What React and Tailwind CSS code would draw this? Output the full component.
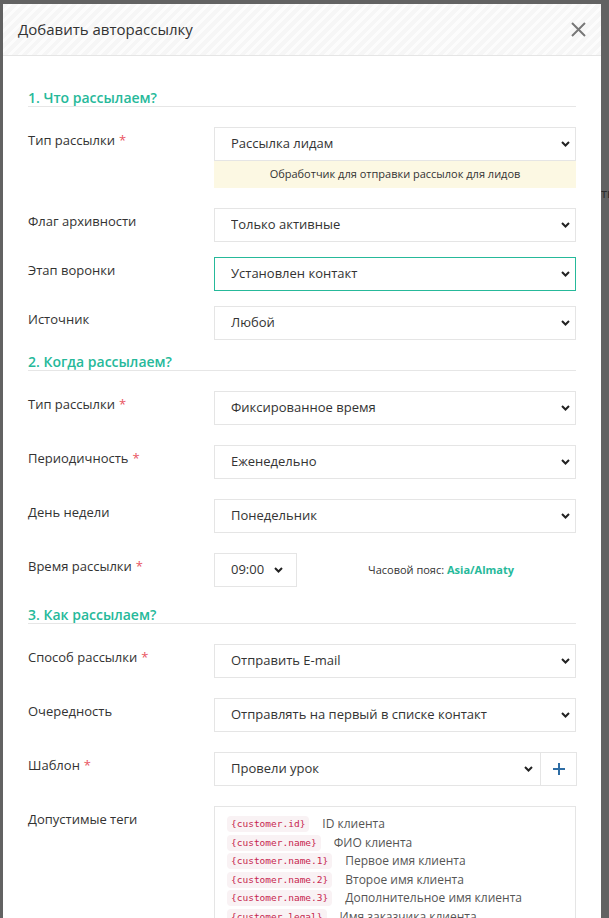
import React from "react";

// Шеврон селекта
function Chevron({ className = "" }) {
  return (
    <svg
      width="9"
      height="6"
      viewBox="0 0 9 6"
      className={"pointer-events-none absolute top-1/2 -translate-y-1/2 " + className}
    >
      <path d="M1 1l3.5 3.5L8 1" fill="none" stroke="#222" strokeWidth="2" />
    </svg>
  );
}

function Select({ value, focused = false, className = "w-[362px]", chevron = "right-[6px]" }) {
  return (
    <div className={"relative h-[34px] " + className}>
      <select
        defaultValue={value}
        className={
          "h-full w-full appearance-none bg-white pl-[16px] pr-6 text-[13px] text-[#333] outline-none border " +
          (focused ? "border-[#26b99a]" : "border-[#e5e5e5]")
        }
      >
        <option>{value}</option>
      </select>
      <Chevron className={chevron} />
    </div>
  );
}

function Label({ children, required }) {
  return (
    <div className="w-[186px] shrink-0 pt-[4px] text-[13px] leading-[18px] text-[#333]">
      {children}
      {required && <span className="ml-[4px] text-[#e9545f]">*</span>}
    </div>
  );
}

function Row({ label, required, className = "", children }) {
  return (
    <div className={"flex " + className}>
      <Label required={required}>{label}</Label>
      <div>{children}</div>
    </div>
  );
}

function Heading({ children, className = "" }) {
  return (
    <div
      className={
        "border-b border-[#e6e6e6] text-[14px] font-semibold leading-[16px] text-[#26b99a] " + className
      }
    >
      {children}
    </div>
  );
}

const tags = [
  ["{customer.id}", "ID клиента"],
  ["{customer.name}", "ФИО клиента"],
  ["{customer.name.1}", "Первое имя клиента"],
  ["{customer.name.2}", "Второе имя клиента"],
  ["{customer.name.3}", "Дополнительное имя клиента"],
  ["{customer.legal}", "Имя заказчика клиента"],
];

export default function App() {
  return (
    <div
      className="flex h-[918px] w-[609px] overflow-hidden bg-[#626262] pl-[3px] pt-[4px]"
      style={{ fontFamily: "'Open Sans', 'Noto Sans', sans-serif" }}
    >
      {/* ── Модалка ─────────────────────────────────────────── */}
      <div className="w-[598px] shrink-0 bg-white">
        <div className="flex h-[52px] items-center justify-between border-b border-[#e5e5e5] bg-[repeating-linear-gradient(135deg,#f6f6f6_0,#f6f6f6_4px,#fcfcfc_4px,#fcfcfc_7px)] pl-[15px] pr-[15px]">
          <span className="text-[15px] text-[#333]">Добавить авторассылку</span>
          <svg width="15" height="15" viewBox="0 0 15 15">
            <path d="M1 1l13 13M14 1L1 14" stroke="#777" strokeWidth="2" />
          </svg>
        </div>

        <div className="px-[25px] pt-[34px]">
          <Heading>1. Что рассылаем?</Heading>

          <Row label="Тип рассылки" required className="mt-[20px]">
            <Select value="Рассылка лидам" />
            <div className="flex h-[27px] w-[362px] items-center justify-center bg-[#fcf8e3] text-[11px] text-[#333]">
              Обработчик для отправки рассылок для лидов
            </div>
          </Row>
          <Row label="Флаг архивности" className="mt-[20px]">
            <Select value="Только активные" />
          </Row>
          <Row label="Этап воронки" className="mt-[15px]">
            <Select value="Установлен контакт" focused />
          </Row>
          <Row label="Источник" className="mt-[15px]">
            <Select value="Любой" />
          </Row>

          <Heading className="mt-[14px]">2. Когда рассылаем?</Heading>

          <Row label="Тип рассылки" required className="mt-[20px]">
            <Select value="Фиксированное время" />
          </Row>
          <Row label="Периодичность" required className="mt-[20px]">
            <Select value="Еженедельно" />
          </Row>
          <Row label="День недели" className="mt-[20px]">
            <Select value="Понедельник" />
          </Row>
          <Row label="Время рассылки" required className="mt-[20px]">
            <div className="flex items-center">
              <Select value="09:00" className="w-[83px]" chevron="right-[14px]" />
              <span className="ml-[71px] text-[11px] text-[#333]">
                Часовой пояс: <b className="font-bold text-[#26b99a]">Asia/Almaty</b>
              </span>
            </div>
          </Row>

          <Heading className="mt-[20px]">3. Как рассылаем?</Heading>

          <Row label="Способ рассылки" required className="mt-[20px]">
            <Select value="Отправить E-mail" />
          </Row>
          <Row label="Очередность" className="mt-[20px]">
            <Select value="Отправлять на первый в списке контакт" />
          </Row>
          <Row label="Шаблон" required className="mt-[20px]">
            <div className="flex">
              <Select value="Провели урок" className="w-[327px]" chevron="right-[8px]" />
              <button className="flex h-[34px] w-[36px] items-center justify-center border border-l-0 border-[#e5e5e5]">
                <svg width="12" height="12" viewBox="0 0 12 12">
                  <path d="M6 0v12M0 6h12" stroke="#2e6da4" strokeWidth="2" />
                </svg>
              </button>
            </div>
          </Row>
          <Row label="Допустимые теги" className="mt-[20px]">
            <div className="flex h-[200px] w-[362px] flex-col gap-[2.6px] border border-[#e5e5e5] pl-[12px] pt-[9px]">
              {tags.map(([code, text]) => (
                <div key={code} className="flex h-[16px] items-center">
                  <code
                    className="rounded-[4px] bg-[#f9f2f4] px-[4px] text-[9.5px] leading-[16px] text-[#c7254e]"
                    style={{ fontFamily: "'DejaVu Sans Mono', monospace" }}
                  >
                    {code}
                  </code>
                  <span className="ml-[13px] text-[12px] text-[#555]">{text}</span>
                </div>
              ))}
            </div>
          </Row>
        </div>
      </div>

      {/* Фон страницы за оверлеем */}
      <div className="overflow-hidden whitespace-nowrap pt-[180px] text-[13px] text-[#2a2a2a]">ты</div>
    </div>
  );
}
